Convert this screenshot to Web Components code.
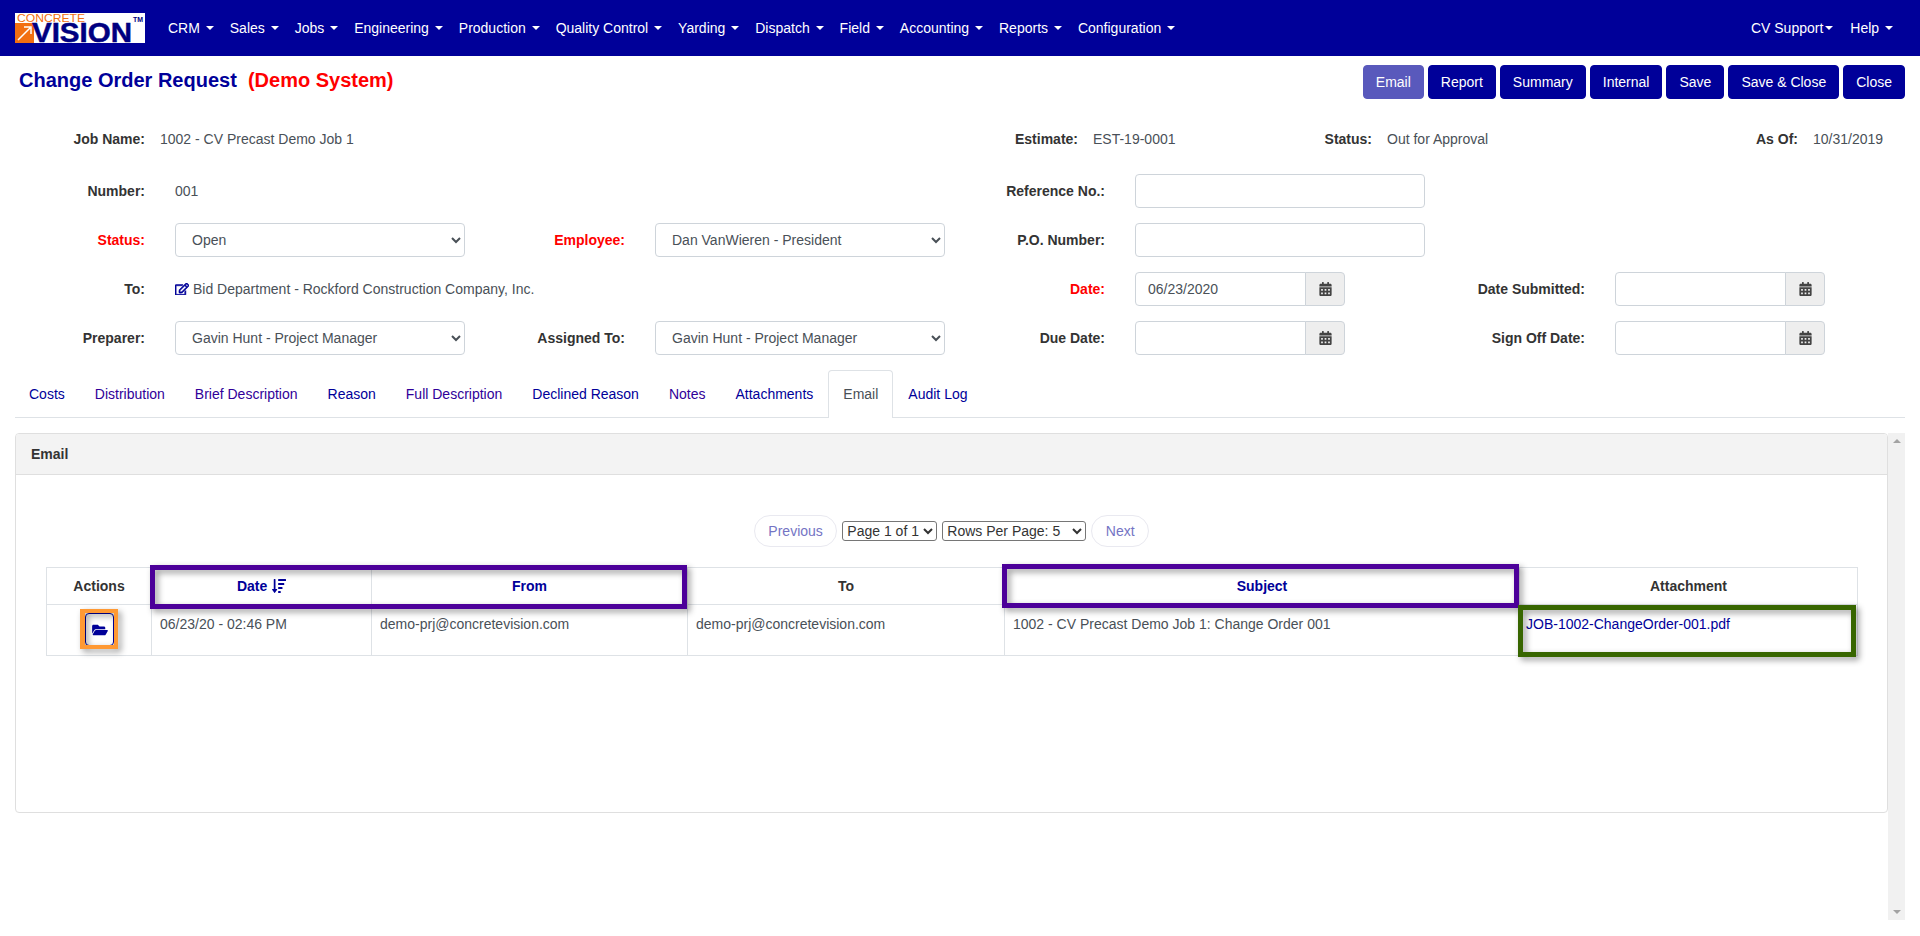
<!DOCTYPE html>
<html lang="en">
<head>
<meta charset="utf-8">
<title>Change Order Request</title>
<style>
html, body { margin:0; padding:0; background:#fff; }
body { font:14px/20px "Liberation Sans", Arial, sans-serif; color:#333; overflow:hidden; }
</style>
</head>
<body>
<cv-navbar>
    <cv-navitem>CRM</cv-navitem>
    <cv-navitem>Sales</cv-navitem>
    <cv-navitem>Jobs</cv-navitem>
    <cv-navitem>Engineering</cv-navitem>
    <cv-navitem>Production</cv-navitem>
    <cv-navitem>Quality Control</cv-navitem>
    <cv-navitem>Yarding</cv-navitem>
    <cv-navitem>Dispatch</cv-navitem>
    <cv-navitem>Field</cv-navitem>
    <cv-navitem>Accounting</cv-navitem>
    <cv-navitem>Reports</cv-navitem>
    <cv-navitem>Configuration</cv-navitem>
    <cv-navitem slot="right" tight>CV Support</cv-navitem>
    <cv-navitem slot="right">Help</cv-navitem>
</cv-navbar>

<cv-titlebar>
    <span slot="title">Change Order Request&nbsp;&nbsp;</span><b slot="note">(Demo System)</b>
    <cv-btn slot="actions" faded>Email</cv-btn>
    <cv-btn slot="actions">Report</cv-btn>
    <cv-btn slot="actions">Summary</cv-btn>
    <cv-btn slot="actions">Internal</cv-btn>
    <cv-btn slot="actions">Save</cv-btn>
    <cv-btn slot="actions">Save &amp; Close</cv-btn>
    <cv-btn slot="actions">Close</cv-btn>
</cv-titlebar>

<cv-jobhead>
    <cv-label>Job Name:</cv-label><cv-text>1002 - CV Precast Demo Job 1</cv-text>
    <cv-label>Estimate:</cv-label><cv-text>EST-19-0001</cv-text>
    <cv-label>Status:</cv-label><cv-text>Out for Approval</cv-text>
    <cv-label>As Of:</cv-label><cv-text>10/31/2019</cv-text>
</cv-jobhead>

<cv-form>
    <cv-label>Number:</cv-label><cv-text style="grid-column:span 3">001</cv-text>
    <cv-label>Reference No.:</cv-label><cv-input></cv-input>
    <span style="grid-column:span 2"></span>

    <cv-label required>Status:</cv-label><cv-select value="Open"></cv-select>
    <cv-label required>Employee:</cv-label><cv-select value="Dan VanWieren - President"></cv-select>
    <cv-label>P.O. Number:</cv-label><cv-input></cv-input>
    <span style="grid-column:span 2"></span>

    <cv-label>To:</cv-label><cv-text edit style="grid-column:span 3">Bid Department - Rockford Construction Company, Inc.</cv-text>
    <cv-label required>Date:</cv-label><cv-date value="06/23/2020"></cv-date>
    <cv-label>Date Submitted:</cv-label><cv-date></cv-date>

    <cv-label>Preparer:</cv-label><cv-select value="Gavin Hunt - Project Manager"></cv-select>
    <cv-label>Assigned To:</cv-label><cv-select value="Gavin Hunt - Project Manager"></cv-select>
    <cv-label>Due Date:</cv-label><cv-date></cv-date>
    <cv-label>Sign Off Date:</cv-label><cv-date></cv-date>
</cv-form>

<cv-tabs>
    <cv-tab>Costs</cv-tab>
    <cv-tab visited>Distribution</cv-tab>
    <cv-tab visited>Brief Description</cv-tab>
    <cv-tab>Reason</cv-tab>
    <cv-tab visited>Full Description</cv-tab>
    <cv-tab>Declined Reason</cv-tab>
    <cv-tab visited>Notes</cv-tab>
    <cv-tab>Attachments</cv-tab>
    <cv-tab active>Email</cv-tab>
    <cv-tab>Audit Log</cv-tab>
</cv-tabs>

<cv-scrollpane>
    <cv-panel heading="Email">
        <cv-pager></cv-pager>
        <cv-emailtable></cv-emailtable>
    </cv-panel>
</cv-scrollpane>

<script>
const FOLDER = 'M572.694 292.093L500.27 416.248A63.997 63.997 0 0 1 444.989 448H45.025c-18.523 0-30.064-20.093-20.731-36.093l72.424-124.155A64 64 0 0 1 152 256h399.964c18.523 0 30.064 20.093 20.73 36.093zM152 224h328v-48c0-26.51-21.49-48-48-48H272l-64-64H48C21.49 64 0 85.49 0 112v278.046l69.077-118.418C86.214 242.25 117.989 224 152 224z';
const CALENDAR = 'M0 464c0 26.5 21.5 48 48 48h352c26.5 0 48-21.5 48-48V192H0v272zm320-196c0-6.6 5.4-12 12-12h40c6.6 0 12 5.4 12 12v40c0 6.6-5.4 12-12 12h-40c-6.6 0-12-5.4-12-12v-40zm0 128c0-6.6 5.4-12 12-12h40c6.6 0 12 5.4 12 12v40c0 6.6-5.4 12-12 12h-40c-6.6 0-12-5.4-12-12v-40zM192 268c0-6.6 5.4-12 12-12h40c6.6 0 12 5.4 12 12v40c0 6.6-5.4 12-12 12h-40c-6.6 0-12-5.4-12-12v-40zm0 128c0-6.6 5.4-12 12-12h40c6.6 0 12 5.4 12 12v40c0 6.6-5.4 12-12 12h-40c-6.6 0-12-5.4-12-12v-40zM64 268c0-6.6 5.4-12 12-12h40c6.6 0 12 5.4 12 12v40c0 6.6-5.4 12-12 12H76c-6.6 0-12-5.4-12-12v-40zm0 128c0-6.6 5.4-12 12-12h40c6.6 0 12 5.4 12 12v40c0 6.6-5.4 12-12 12H76c-6.6 0-12-5.4-12-12v-40zM400 64h-48V16c0-8.8-7.2-16-16-16h-32c-8.8 0-16 7.2-16 16v48H160V16c0-8.8-7.2-16-16-16h-32c-8.8 0-16 7.2-16 16v48H48C21.5 64 0 85.5 0 112v48h448v-48c0-26.5-21.5-48-48-48z';
const EDIT = 'M402.3 344.9l32-32c5-5 13.7-1.5 13.7 5.7V464c0 26.5-21.5 48-48 48H48c-26.5 0-48-21.5-48-48V112c0-26.5 21.5-48 48-48h273.5c7.1 0 10.7 8.6 5.7 13.7l-32 32c-1.5 1.5-3.5 2.3-5.7 2.3H48v352h352V350.5c0-2.1.8-4.1 2.3-5.6zm156.6-201.8L296.3 405.7l-90.4 10c-26.2 2.9-48.5-19.2-45.6-45.6l10-90.4L432.9 17.1c22.9-22.9 59.9-22.9 82.7 0l43.2 43.2c22.9 22.9 22.9 60 .1 82.8zM460.1 174L402 115.9 216.2 301.8l-7.3 65.3 65.3-7.3L460.1 174zm64.8-79.7l-43.2-43.2c-4.1-4.1-10.8-4.1-14.8 0L436 82l58.1 58.1 30.9-30.9c4-4.2 4-10.8-.1-14.9z';
const SORT = 'M304 416h-64a16 16 0 0 0-16 16v32a16 16 0 0 0 16 16h64a16 16 0 0 0 16-16v-32a16 16 0 0 0-16-16zm-128-64h-48V48a16 16 0 0 0-16-16H80a16 16 0 0 0-16 16v304H16c-14.19 0-21.37 17.24-11.29 27.31l80 96a16 16 0 0 0 22.62 0l80-96C197.35 369.26 190.22 352 176 352zm256-192H240a16 16 0 0 0-16 16v32a16 16 0 0 0 16 16h192a16 16 0 0 0 16-16v-32a16 16 0 0 0-16-16zm-64 128H240a16 16 0 0 0-16 16v32a16 16 0 0 0 16 16h128a16 16 0 0 0 16-16v-32a16 16 0 0 0-16-16zM496 32H240a16 16 0 0 0-16 16v32a16 16 0 0 0 16 16h256a16 16 0 0 0 16-16V48a16 16 0 0 0-16-16z';

// small base so every element below just hands over its markup
class Shadowed extends HTMLElement {
    constructor(html) {
        super();
        this.attachShadow({mode: 'open'}).innerHTML = html;
    }
}

customElements.define('cv-navbar', class extends Shadowed {
    constructor() {
        super(`
        <style>
        :host { display:flex; align-items:center; height:56px; background:#000099; }
        svg { display:block; margin:0 15px; flex:none; overflow:visible; }
        .left { display:flex; }
        .right { display:flex; margin-left:auto; margin-right:19px; }
        </style>
        <svg width="130" height="30" viewBox="0 0 130 30" role="img" aria-label="Concrete Vision">
            <rect width="130" height="30" fill="#fff"/>
            <rect x="0" y="10" width="19" height="20" fill="#f26f12"/>
            <path d="M3 27 L15 15 M9 14 h7 v7" fill="none" stroke="#fff" stroke-width="1.5"/>
            <text x="2" y="8.6" font-family="Liberation Sans" font-size="10.5" fill="#f26f12" textLength="68" lengthAdjust="spacingAndGlyphs">CONCRETE</text>
            <text x="17" y="29" font-family="Liberation Sans" font-weight="bold" font-size="28" fill="#000080" stroke="#000080" stroke-width=".5" textLength="100" lengthAdjust="spacingAndGlyphs">VISION</text>
            <text x="118" y="8.5" font-family="Liberation Sans" font-weight="bold" font-size="6.5" fill="#000080" textLength="10" lengthAdjust="spacingAndGlyphs">TM</text>
        </svg>
        <div class="left"><slot></slot></div>
        <div class="right"><slot name="right"></slot></div>`);
    }
});

customElements.define('cv-navitem', class extends Shadowed {
    constructor() {
        super(`
        <style>
        :host { display:flex; align-items:center; padding:0 8px; color:#fff; font-size:14px; white-space:nowrap; }
        i { display:inline-block; width:0; height:0; margin-left:5.9px; border:4px solid transparent; border-top-color:#fff; border-bottom:0; }
        :host([tight]) i { margin-left:2px; }
        :host([tight]) { padding-right:9px; }
        </style>
        <slot></slot><i></i>`);
    }
});

customElements.define('cv-titlebar', class extends Shadowed {
    constructor() {
        super(`
        <style>
        :host { display:flex; align-items:center; margin:9px 15px 0 19px; height:34px; color:#000099; font-size:20px; line-height:24px; font-weight:bold; white-space:nowrap; }
        ::slotted([slot=note]) { color:#f00; }
        .actions { display:flex; gap:4px; margin-left:auto; font-weight:normal; }
        .title { position:relative; top:-2px; }
        </style>
        <span class="title"><slot name="title"></slot><slot name="note"></slot></span>
        <div class="actions"><slot name="actions"></slot></div>`);
    }
});

customElements.define('cv-btn', class extends Shadowed {
    constructor() {
        super(`
        <style>
        :host { display:block; box-sizing:border-box; height:34px; padding:6px 12px; border:1px solid #000099; border-radius:4px; background:#000099; color:#fff; font-size:14px; line-height:20px; white-space:nowrap; }
        :host([faded]) { background:#5959bc; border-color:#5959bc; }
        </style>
        <slot></slot>`);
    }
});

customElements.define('cv-jobhead', class extends Shadowed {
    constructor() {
        super(`
        <style>
        :host { display:grid; grid-template-columns:130px 840px 63px 218px 46px 354px 42px auto; column-gap:15px; height:34px; margin:23px 0 0 15px; }
        </style>
        <slot></slot>`);
    }
});

customElements.define('cv-form', class extends Shadowed {
    constructor() {
        super(`
        <style>
        :host { display:grid; grid-template-columns:160px 290px 190px 290px 190px 290px 190px 210px; grid-auto-rows:34px; row-gap:15px; margin:18px 0 0 15px; }
        </style>
        <slot></slot>`);
    }
});

customElements.define('cv-label', class extends Shadowed {
    constructor() {
        super(`
        <style>
        :host { display:flex; align-items:center; justify-content:flex-end; font-weight:bold; color:#333; white-space:nowrap; }
        :host([required]) { color:#f00; }
        </style>
        <slot></slot>`);
    }
    connectedCallback() {
        // form labels keep a 30px gutter before their control, the job head uses its grid gap
        if (this.parentNode.tagName === 'CV-FORM') this.style.paddingRight = '30px';
    }
});

customElements.define('cv-text', class extends Shadowed {
    constructor() {
        super(`
        <style>
        :host { display:flex; align-items:center; color:#495057; white-space:nowrap; }
        svg { width:14px; height:12.5px; fill:#000099; stroke:#000099; stroke-width:22; margin:0 4px 0 0; flex:none; display:none; }
        :host([edit]) svg { display:block; }
        </style>
        <svg viewBox="0 0 576 512"><path d="${EDIT}"/></svg><slot></slot>`);
    }
});

customElements.define('cv-select', class extends Shadowed {
    constructor() {
        super(`
        <style>
        :host { display:block; }
        select { display:block; box-sizing:border-box; width:100%; height:34px; padding:6px 12px; border:1px solid #ced4da; border-radius:4px; background:#fff; color:#495057; font:14px/20px "Liberation Sans", Arial, sans-serif; }
        </style>
        <select><option></option></select>`);
    }
    connectedCallback() {
        this.shadowRoot.querySelector('option').textContent = this.getAttribute('value');
    }
});

customElements.define('cv-input', class extends Shadowed {
    constructor() {
        super(`
        <style>
        :host { display:block; }
        input { display:block; box-sizing:border-box; width:100%; height:34px; padding:6px 12px; border:1px solid #ced4da; border-radius:4px; color:#495057; font:14px/20px "Liberation Sans", Arial, sans-serif; }
        </style>
        <input type="text">`);
    }
});

customElements.define('cv-date', class extends Shadowed {
    constructor() {
        super(`
        <style>
        :host { display:flex; width:210px; height:34px; }
        input { box-sizing:border-box; width:171px; height:34px; padding:6px 12px; border:1px solid #ced4da; border-radius:4px 0 0 4px; color:#495057; font:14px/20px "Liberation Sans", Arial, sans-serif; }
        span { box-sizing:border-box; display:flex; align-items:center; justify-content:center; margin-left:-1px; flex:1; border:1px solid #ced4da; border-radius:0 4px 4px 0; background:#eee; }
        svg { width:13px; height:14px; fill:#444; }
        </style>
        <input type="text"><span><svg viewBox="0 0 448 512"><path d="${CALENDAR}"/></svg></span>`);
    }
    connectedCallback() {
        this.shadowRoot.querySelector('input').value = this.getAttribute('value') || '';
    }
});

customElements.define('cv-tabs', class extends Shadowed {
    constructor() {
        super(`
        <style>
        :host { display:flex; height:48px; box-sizing:border-box; margin:15px 15px 0; border-bottom:1px solid #dee2e6; }
        ::slotted(:first-child) { padding-left:13px; }
        </style>
        <slot></slot>`);
    }
});

customElements.define('cv-tab', class extends Shadowed {
    constructor() {
        super(`
        <style>
        :host { display:block; box-sizing:border-box; height:48px; padding:13px 14px 0; border:1px solid transparent; border-bottom:0; border-radius:4px 4px 0 0; color:#000099; white-space:nowrap; }
        :host([visited]) { color:#300099; }
        :host([active]) { border-color:#dee2e6; background:#fff; color:#495057; }
        </style>
        <slot></slot>`);
    }
});

customElements.define('cv-scrollpane', class extends Shadowed {
    constructor() {
        super(`
        <style>
        :host { display:flex; height:487px; margin:15px 15px 0; }
        .content { flex:1; min-width:0; }
        .bar { width:17px; display:flex; flex-direction:column; justify-content:space-between; align-items:center; background:#f1f1f1; padding:6px 0; box-sizing:border-box; }
        .bar i { width:0; height:0; border:4px solid transparent; }
        .bar .up { border-bottom-color:#a3a3a3; border-top:0; }
        .bar .down { border-top-color:#a3a3a3; border-bottom:0; }
        </style>
        <div class="content"><slot></slot></div>
        <div class="bar"><i class="up"></i><i class="down"></i></div>`);
    }
});

customElements.define('cv-panel', class extends Shadowed {
    constructor() {
        super(`
        <style>
        :host { display:block; box-sizing:border-box; height:380px; border:1px solid #dfdfdf; border-radius:4px; }
        header { box-sizing:border-box; height:41px; padding:10px 15px; background:#f3f3f3; border-bottom:1px solid #dfdfdf; border-radius:3px 3px 0 0; font-weight:bold; color:#333; }
        .body { padding:40px 30px 0; }
        </style>
        <header></header>
        <div class="body"><slot></slot></div>`);
    }
    connectedCallback() {
        this.shadowRoot.querySelector('header').textContent = this.getAttribute('heading');
    }
});

customElements.define('cv-pager', class extends Shadowed {
    constructor() {
        super(`
        <style>
        :host { display:flex; justify-content:center; align-items:center; gap:5px; height:32px; }
        a { box-sizing:border-box; height:32px; padding:5px 13.5px; border:1px solid #e9e9f0; border-radius:16px; color:#7474c4; }
        select { box-sizing:border-box; height:20px; padding:0; border:1px solid #767676; border-radius:3px; background:#fff; color:#333; font:14px "Liberation Sans", Arial, sans-serif; }
        .page { width:95px; }
        .rows { width:144px; }
        </style>
        <a>Previous</a>
        <select class="page"><option>Page 1 of 1</option></select>
        <select class="rows"><option>Rows Per Page: 5</option></select>
        <a>Next</a>`);
    }
});

customElements.define('cv-emailtable', class extends Shadowed {
    constructor() {
        super(`
        <style>
        :host { display:block; position:relative; width:1811px; margin-top:20px; }
        table { border-collapse:collapse; table-layout:fixed; width:1811px; color:#495057; }
        th, td { border:1px solid #dee2e6; padding:0; }
        th { height:36px; font-weight:bold; color:#333; text-align:center; }
        th.sort { color:#000099; }
        th svg { width:14px; height:16px; fill:#000099; vertical-align:-3px; margin-left:1px; }
        td { height:51px; padding:9px 8px 0; vertical-align:top; box-sizing:border-box; line-height:20px; }
        td a { color:#000099; }
        td.file { padding-left:6px; }
        td.act { padding:0 0 0 1px; }
        .open { display:flex; align-items:center; justify-content:center; box-sizing:border-box; width:29px; height:33px; margin:8px auto 0; border:1px solid #000099; border-radius:4px; background:#fff; }
        .open svg { width:16px; height:14px; fill:#000099; }
        .mark { position:absolute; box-sizing:border-box; border:5px solid; pointer-events:none; filter:drop-shadow(3px 3px 3px rgba(0,0,0,.4)); }
        </style>
        <table>
            <colgroup><col style="width:105px"><col style="width:220px"><col style="width:316px"><col style="width:317px"><col style="width:515px"><col style="width:338px"></colgroup>
            <thead><tr>
                <th>Actions</th>
                <th class="sort">Date <svg viewBox="0 0 512 512" preserveAspectRatio="none"><path d="${SORT}"/></svg></th>
                <th class="sort">From</th>
                <th>To</th>
                <th class="sort">Subject</th>
                <th>Attachment</th>
            </tr></thead>
            <tbody><tr>
                <td class="act"><div class="open"><svg viewBox="0 0 576 512"><path d="${FOLDER}"/></svg></div></td>
                <td>06/23/20 - 02:46 PM</td>
                <td>demo-prj@concretevision.com</td>
                <td>demo-prj@concretevision.com</td>
                <td>1002 - CV Precast Demo Job 1: Change Order 001</td>
                <td class="file"><a>JOB-1002-ChangeOrder-001.pdf</a></td>
            </tr></tbody>
        </table>
        <div class="mark" style="left:104px;top:-2px;width:537px;height:44px;color:#4c0099"></div>
        <div class="mark" style="left:956px;top:-3px;width:517px;height:44px;color:#4c0099"></div>
        <div class="mark" style="left:1472px;top:38px;width:338px;height:52px;color:#386600"></div>
        <div class="mark" style="left:34px;top:42px;width:38px;height:40px;border-width:4px 4px 4px 5px;color:#ff9933"></div>`);
    }
});
</script>
</body>
</html>
